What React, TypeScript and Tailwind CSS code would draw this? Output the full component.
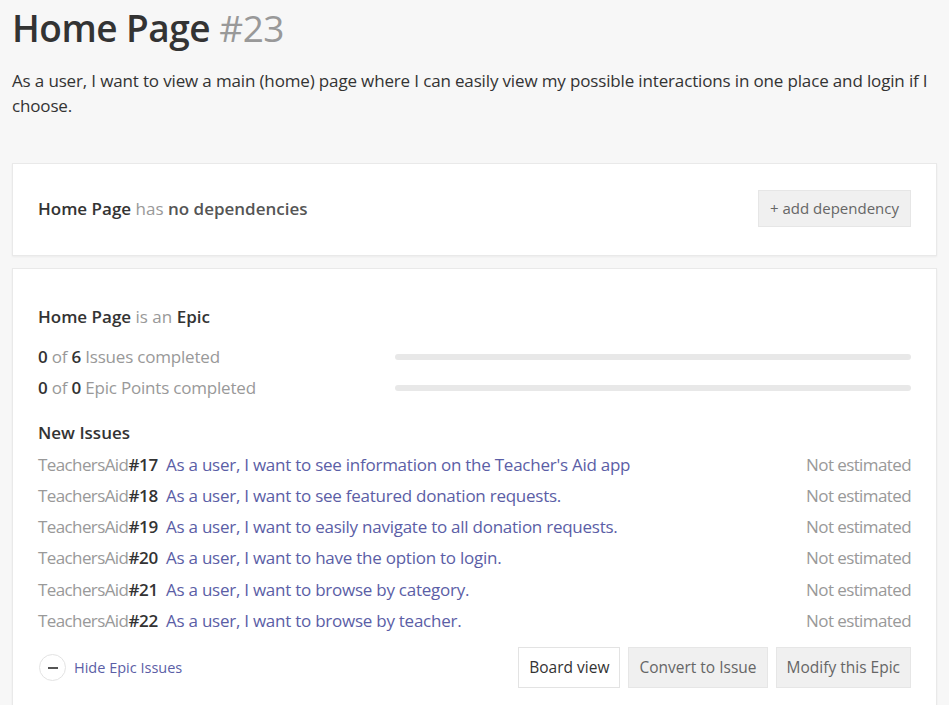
const issues = [
  { num: 17, title: "As a user, I want to see information on the Teacher's Aid app" },
  { num: 18, title: "As a user, I want to see featured donation requests." },
  { num: 19, title: "As a user, I want to easily navigate to all donation requests." },
  { num: 20, title: "As a user, I want to have the option to login." },
  { num: 21, title: "As a user, I want to browse by category." },
  { num: 22, title: "As a user, I want to browse by teacher." },
];

const ProgressLine = ({ done, total, label }: { done: number; total: number; label: string }) => (
  <div className="flex items-center h-[31px]">
    <div className="w-[357px] text-[17px] text-[#999] tracking-[-0.2px]">
      <span className="font-semibold text-[#333]">{done}</span> of{" "}
      <span className="font-semibold text-[#333]">{total}</span> {label}
    </div>
    <div className="flex-1 h-[6px] rounded-full bg-[#e8e8e8]">
      <div className="h-full rounded-full bg-[#5b5ea6]" style={{ width: total ? `${(done / total) * 100}%` : "0%" }} />
    </div>
  </div>
);

export default function App() {
  return (
    <div
      className="min-h-screen bg-[#f7f7f7] text-[#333] px-3 pt-[4px]"
      style={{ fontFamily: '"Open Sans", "Noto Sans", sans-serif' }}
    >
      <h1 className="text-[37px] font-semibold leading-[48px] tracking-[-0.5px]">
        Home Page <span className="font-normal text-[#999]">#23</span>
      </h1>
      <p className="mt-[16px] text-[17px] leading-[25px] tracking-[-0.15px]">
        As a user, I want to view a main (home) page where I can easily view my possible interactions in one place and login if I choose.
      </p>

      {/* Dependencies */}
      <div className="mt-[45px] bg-white border border-[#e9e9e9] shadow-[0_1px_2px_rgba(0,0,0,0.05)] h-[93px] px-[25px] flex items-center justify-between">
        <div className="text-[17px] -mt-[2px]">
          <span className="font-semibold">Home Page</span>{" "}
          <span className="text-[#999]">has</span>{" "}
          <span className="font-semibold text-[#555]">no dependencies</span>
        </div>
        <button className="h-[37px] -mt-[2px] px-[11px] bg-[#f0f0f0] border border-[#e6e6e6] text-[15px] text-[#666]">
          + add dependency
        </button>
      </div>

      {/* Epic */}
      <div className="mt-[12px] bg-white border border-[#e9e9e9] shadow-[0_1px_2px_rgba(0,0,0,0.05)] px-[25px] pt-[33px] pb-[20px]">
        <div className="text-[17px] leading-[30px]">
          <span className="font-semibold">Home Page</span>{" "}
          <span className="text-[#999]">is an</span>{" "}
          <span className="font-semibold">Epic</span>
        </div>
        <div className="mt-[9px]">
          <ProgressLine done={0} total={6} label="Issues completed" />
          <ProgressLine done={0} total={0} label="Epic Points completed" />
        </div>
        <div className="mt-[15px] text-[17px] font-semibold leading-[30px]">New Issues</div>
        <div className="mt-[1px]">
          {issues.map((issue) => (
            <div key={issue.num} className="flex items-center justify-between h-[31.2px] text-[17px] tracking-[-0.25px]">
              <div>
                <span className="text-[#999] tracking-[-0.6px]">TeachersAid</span>
                <span className="font-semibold text-[#333]">#{issue.num}</span>
                <span className="ml-[8px] text-[#5b5ea6]">{issue.title}</span>
              </div>
              <span className="text-[#999] tracking-[-0.6px]">Not estimated</span>
            </div>
          ))}
        </div>
        <div className="mt-[11px] flex items-center justify-between">
          <div className="flex items-center gap-[8px] pl-[1px]">
            <span className="w-[27px] h-[27px] rounded-full border border-[#e3e3e3] flex items-center justify-center">
              <span className="w-[10px] h-[2px] bg-[#555]" />
            </span>
            <span className="text-[14.5px] text-[#5b5ea6]">Hide Epic Issues</span>
          </div>
          <div className="flex gap-[8px] text-[15.5px]">
            <button className="h-[41px] px-[10px] bg-white border border-[#e3e3e3] text-[#333]">Board view</button>
            <button className="h-[41px] px-[10px] bg-[#f0f0f0] border border-[#e6e6e6] text-[#666]">Convert to Issue</button>
            <button className="h-[41px] px-[10px] bg-[#f0f0f0] border border-[#e6e6e6] text-[#666]">Modify this Epic</button>
          </div>
        </div>
      </div>
    </div>
  );
}
